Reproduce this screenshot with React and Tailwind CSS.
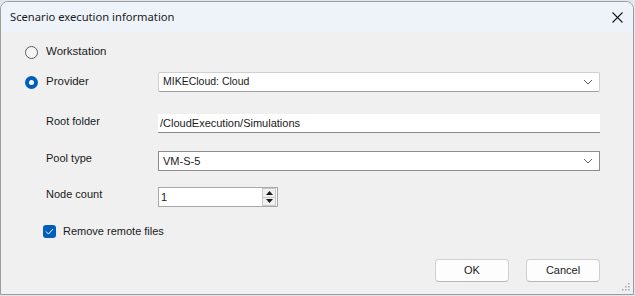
import React from "react";

const Chevron = () => (
  <svg width="10" height="6" viewBox="0 0 10 6" className="shrink-0">
    <path d="M1 1 L5 5 L9 1" fill="none" stroke="#606060" strokeWidth="1" />
  </svg>
);

const Radio = ({ checked, label }) => (
  <div className="flex items-center h-[20px]">
    <div className="w-[24px]" />
    {checked ? (
      <div className="w-[13px] h-[13px] rounded-full bg-[#005fb8] flex items-center justify-center">
        <div className="w-[5px] h-[5px] rounded-full bg-white" />
      </div>
    ) : (
      <div className="w-[13px] h-[13px] rounded-full border border-[#5c5c5c] bg-[#f5f5f5]" />
    )}
    <span className="ml-[8px] text-[11.5px] text-[#1a1a1a]">{label}</span>
  </div>
);

const ResizeGrip = () => (
  <svg width="9" height="9" viewBox="0 0 9 9" className="absolute right-[3px] bottom-[3px]">
    {[
      [7, 1],
      [4, 4],
      [7, 4],
      [1, 7],
      [4, 7],
      [7, 7],
    ].map(([x, y]) => (
      <rect key={`${x}-${y}`} x={x} y={y} width="1.5" height="1.5" fill="#a8a8a8" />
    ))}
  </svg>
);

export default function App() {
  return (
    <div
      className="w-[635px] h-[296px] bg-[#dfe6ee] pt-[1px]"
      style={{ fontFamily: "'Liberation Sans', Arial, sans-serif" }}
    >
      <div className="relative w-[634px] h-[294px] rounded-t-[8px] border border-[#9d9d9d] bg-[#f0f0f0] overflow-hidden flex flex-col">
        {/* Title bar */}
        <div className="h-[30px] shrink-0 bg-[#eef3fa] flex items-center justify-between pl-[9px] pr-[10px]">
          <span className="text-[11.2px] text-[#1a1a1a]" style={{ fontFamily: "'Noto Sans', sans-serif" }}>
            Scenario execution information
          </span>
          <svg width="11" height="11" viewBox="0 0 11 11">
            <path d="M0.5 0.5 L10.5 10.5 M10.5 0.5 L0.5 10.5" stroke="#1a1a1a" strokeWidth="1.1" />
          </svg>
        </div>

        {/* Body */}
        <div className="flex flex-col text-[11px] text-[#1a1a1a]">
          <div className="mt-[10px]">
            <Radio label="Workstation" />
          </div>

          <div className="mt-[10px] flex items-center">
            <div className="w-[157px]">
              <Radio checked label="Provider" />
            </div>
            <div className="w-[442px] h-[20px] bg-white border border-[#cfcfcf] border-b-[#a0a0a0] rounded-[2px] flex items-center justify-between pl-[4px] pr-[6px]">
              <span className="text-[10.5px]">MIKECloud: Cloud</span>
              <Chevron />
            </div>
          </div>

          <div className="mt-[22px] flex items-start">
            <span className="w-[157px] pl-[45px] leading-[15px]">Root folder</span>
            <div className="w-[442px] h-[19px] bg-white border-b border-[#8a8a8a] flex items-center pl-[2px]">
              <span>/CloudExecution/Simulations</span>
            </div>
          </div>

          <div className="mt-[18px] flex items-start">
            <span className="w-[157px] pl-[45px] leading-[15px]">Pool type</span>
            <div className="w-[442px] h-[20px] bg-white border border-[#8c8c8c] flex items-center justify-between pl-[4px] pr-[6px]">
              <span>VM-S-5</span>
              <Chevron />
            </div>
          </div>

          <div className="mt-[16px] flex items-start">
            <span className="w-[157px] pl-[45px] leading-[15px]">Node count</span>
            <div className="w-[120px] h-[20px] bg-white border border-[#a8a8a8] flex items-center">
              <span className="flex-1 pl-[2px]">1</span>
              <div className="w-[14px] h-[18px] mr-[1px] flex flex-col bg-[#f0f0f0] border border-[#c8c8c8]">
                <div className="flex-1 flex items-center justify-center border-b border-[#c8c8c8]">
                  <svg width="7" height="4" viewBox="0 0 7 4">
                    <path d="M0 4 L3.5 0 L7 4 Z" fill="#1a1a1a" />
                  </svg>
                </div>
                <div className="flex-1 flex items-center justify-center">
                  <svg width="7" height="4" viewBox="0 0 7 4">
                    <path d="M0 0 L3.5 4 L7 0 Z" fill="#1a1a1a" />
                  </svg>
                </div>
              </div>
            </div>
          </div>

          <div className="mt-[17px] flex items-center h-[14px]">
            <div className="w-[42px]" />
            <div className="w-[13px] h-[13px] rounded-[3px] bg-[#005fb8] flex items-center justify-center">
              <svg width="9" height="7" viewBox="0 0 9 7">
                <path d="M1 3.5 L3.5 6 L8 1" fill="none" stroke="#ffffff" strokeWidth="1" />
              </svg>
            </div>
            <span className="ml-[7px]">Remove remote files</span>
          </div>

          <div className="mt-[21px] flex justify-end gap-[17px] pr-[33px]">
            <button className="w-[74px] h-[23px] bg-[#fdfdfd] border border-[#d0d0d0] border-b-[#b8b8b8] rounded-[4px] text-[11px] text-[#1a1a1a]">
              OK
            </button>
            <button className="w-[74px] h-[23px] bg-[#fdfdfd] border border-[#d0d0d0] border-b-[#b8b8b8] rounded-[4px] text-[11px] text-[#1a1a1a]">
              Cancel
            </button>
          </div>
        </div>

        <ResizeGrip />
      </div>
    </div>
  );
}
